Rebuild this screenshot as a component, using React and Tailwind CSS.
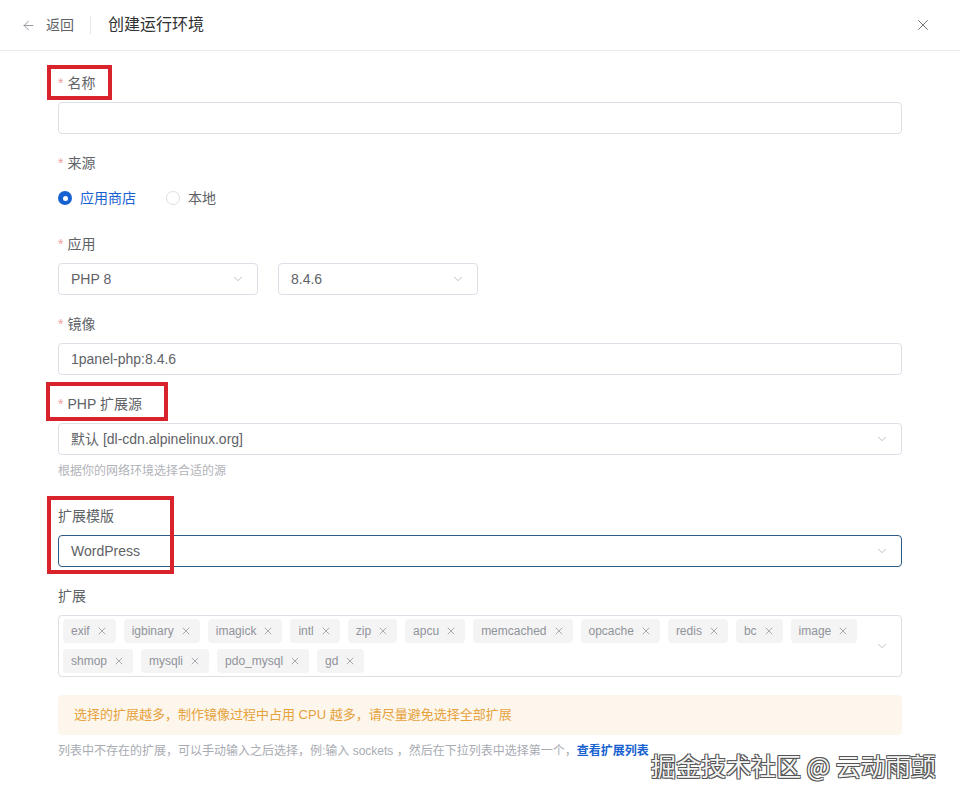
import { ArrowLeft, X, ChevronDown } from 'lucide-react'

const font = { fontFamily: '"Liberation Sans", "Noto Sans CJK SC", sans-serif' }

const extensions = [
  'exif', 'igbinary', 'imagick', 'intl', 'zip', 'apcu', 'memcached', 'opcache', 'redis', 'bc', 'image',
  'shmop', 'mysqli', 'pdo_mysql', 'gd',
]

function Label({ required, children }) {
  return (
    <div className="mb-2 text-[14px] leading-[22px] text-[#606266]">
      {required && <span className="mr-1 text-[#f0a0a0]">*</span>}
      {children}
    </div>
  )
}

function Select({ value, className = '', focused }) {
  return (
    <div
      className={`flex h-8 items-center justify-between rounded-[4px] border bg-white pl-3 pr-3 text-[14px] text-[#606266] ${
        focused ? 'border-[#2c5a88]' : 'border-[#dcdfe6]'
      } ${className}`}
    >
      <span>{value}</span>
      <ChevronDown size={14} strokeWidth={1.4} className="text-[#b0b3b8]" />
    </div>
  )
}

function Tag({ name }) {
  return (
    <span className="flex h-6 items-center gap-[6px] rounded-[4px] bg-[#f4f4f5] px-[8px] text-[12px] text-[#909399]">
      {name}
      <X size={12} strokeWidth={1.5} />
    </span>
  )
}

function RedBox({ className }) {
  return <div className={`pointer-events-none absolute border-[4px] border-[#d8232d] ${className}`} />
}

export default function App() {
  return (
    <div className="relative min-h-[801px] bg-white" style={font}>
      <div className="flex h-[51px] items-center border-b border-[#e8eaee] pl-[21px] pr-[28px]">
        <ArrowLeft size={15} strokeWidth={1.4} className="text-[#8a8d93]" />
        <span className="ml-[10px] text-[14px] text-[#606266]">返回</span>
        <span className="mx-4 h-[18px] w-px bg-[#e4e7ed]" />
        <span className="ml-px text-[16px] text-[#303133]">创建运行环境</span>
        <X size={18} strokeWidth={1.3} className="ml-auto text-[#707378]" />
      </div>

      <div className="px-[58px] pt-[21px]">
        <div className="mb-[18px]">
          <Label required>名称</Label>
          <div className="h-8 rounded-[4px] border border-[#dcdfe6]" />
        </div>

        <div className="mb-[19px]">
          <Label required>来源</Label>
          <div className="flex h-8 items-center text-[14px]">
            <span className="flex h-[14px] w-[14px] items-center justify-center rounded-full bg-[#1762d0]">
              <span className="h-[5px] w-[5px] rounded-full bg-white" />
            </span>
            <span className="ml-2 text-[#1762d0]">应用商店</span>
            <span className="ml-[30px] h-[14px] w-[14px] rounded-full border border-[#dcdfe6]" />
            <span className="ml-2 text-[#606266]">本地</span>
          </div>
        </div>

        <div className="mb-[18px]">
          <Label required>应用</Label>
          <div className="flex gap-5">
            <Select value="PHP 8" className="w-[200px]" />
            <Select value="8.4.6" className="w-[200px]" />
          </div>
        </div>

        <div className="mb-[18px]">
          <Label required>镜像</Label>
          <div className="flex h-8 items-center rounded-[4px] border border-[#dcdfe6] px-3 text-[14px] text-[#606266]">
            1panel-php:8.4.6
          </div>
        </div>

        <div className="mb-[18px]">
          <Label required>PHP 扩展源</Label>
          <Select value="默认 [dl-cdn.alpinelinux.org]" />
          <div className="mt-[6px] text-[12px] leading-[20px] text-[#b1b3b8]">根据你的网络环境选择合适的源</div>
        </div>

        <div className="mb-[18px] pt-[6px]">
          <Label>扩展模版</Label>
          <Select value="WordPress" focused />
        </div>

        <div className="mb-[18px]">
          <Label>扩展</Label>
          <div className="flex items-center rounded-[4px] border border-[#dcdfe6] py-[3px] pl-1 pr-3">
            <div className="flex flex-1 flex-wrap gap-x-[8px] gap-y-[6px]">
              {extensions.map((e) => (
                <Tag key={e} name={e} />
              ))}
            </div>
            <ChevronDown size={14} strokeWidth={1.4} className="text-[#b0b3b8]" />
          </div>
        </div>

        <div className="flex h-10 items-center rounded-[4px] bg-[#fdf6ec] px-4 text-[13px] text-[#e6a23c]">
          选择的扩展越多，制作镜像过程中占用 CPU 越多，请尽量避免选择全部扩展
        </div>
        <div className="mt-[6px] text-[12px] leading-[20px] text-[#a8abb2]">
          列表中不存在的扩展，可以手动输入之后选择，例:输入 sockets ，然后在下拉列表中选择第一个，
          <span className="font-semibold text-[#1762d0]">查看扩展列表</span>
        </div>
      </div>

      <RedBox className="left-[47px] top-[65px] h-[35px] w-[65px]" />
      <RedBox className="left-[46px] top-[382px] h-[39px] w-[122px]" />
      <RedBox className="left-[47px] top-[496px] h-[78px] w-[127px]" />

      <div
        className="pointer-events-none absolute left-[651px] top-[749px] whitespace-nowrap text-[25px] leading-[32px] text-[#f4f4f4]"
        style={{
          fontFamily: '"Noto Sans CJK SC", sans-serif',
          textShadow: '1px 1px 0 #555, -1px -1px 0 #555, 1px -1px 0 #555, -1px 1px 0 #555',
        }}
      >
        掘金技术社区 @ 云动雨颤
      </div>
    </div>
  )
}
